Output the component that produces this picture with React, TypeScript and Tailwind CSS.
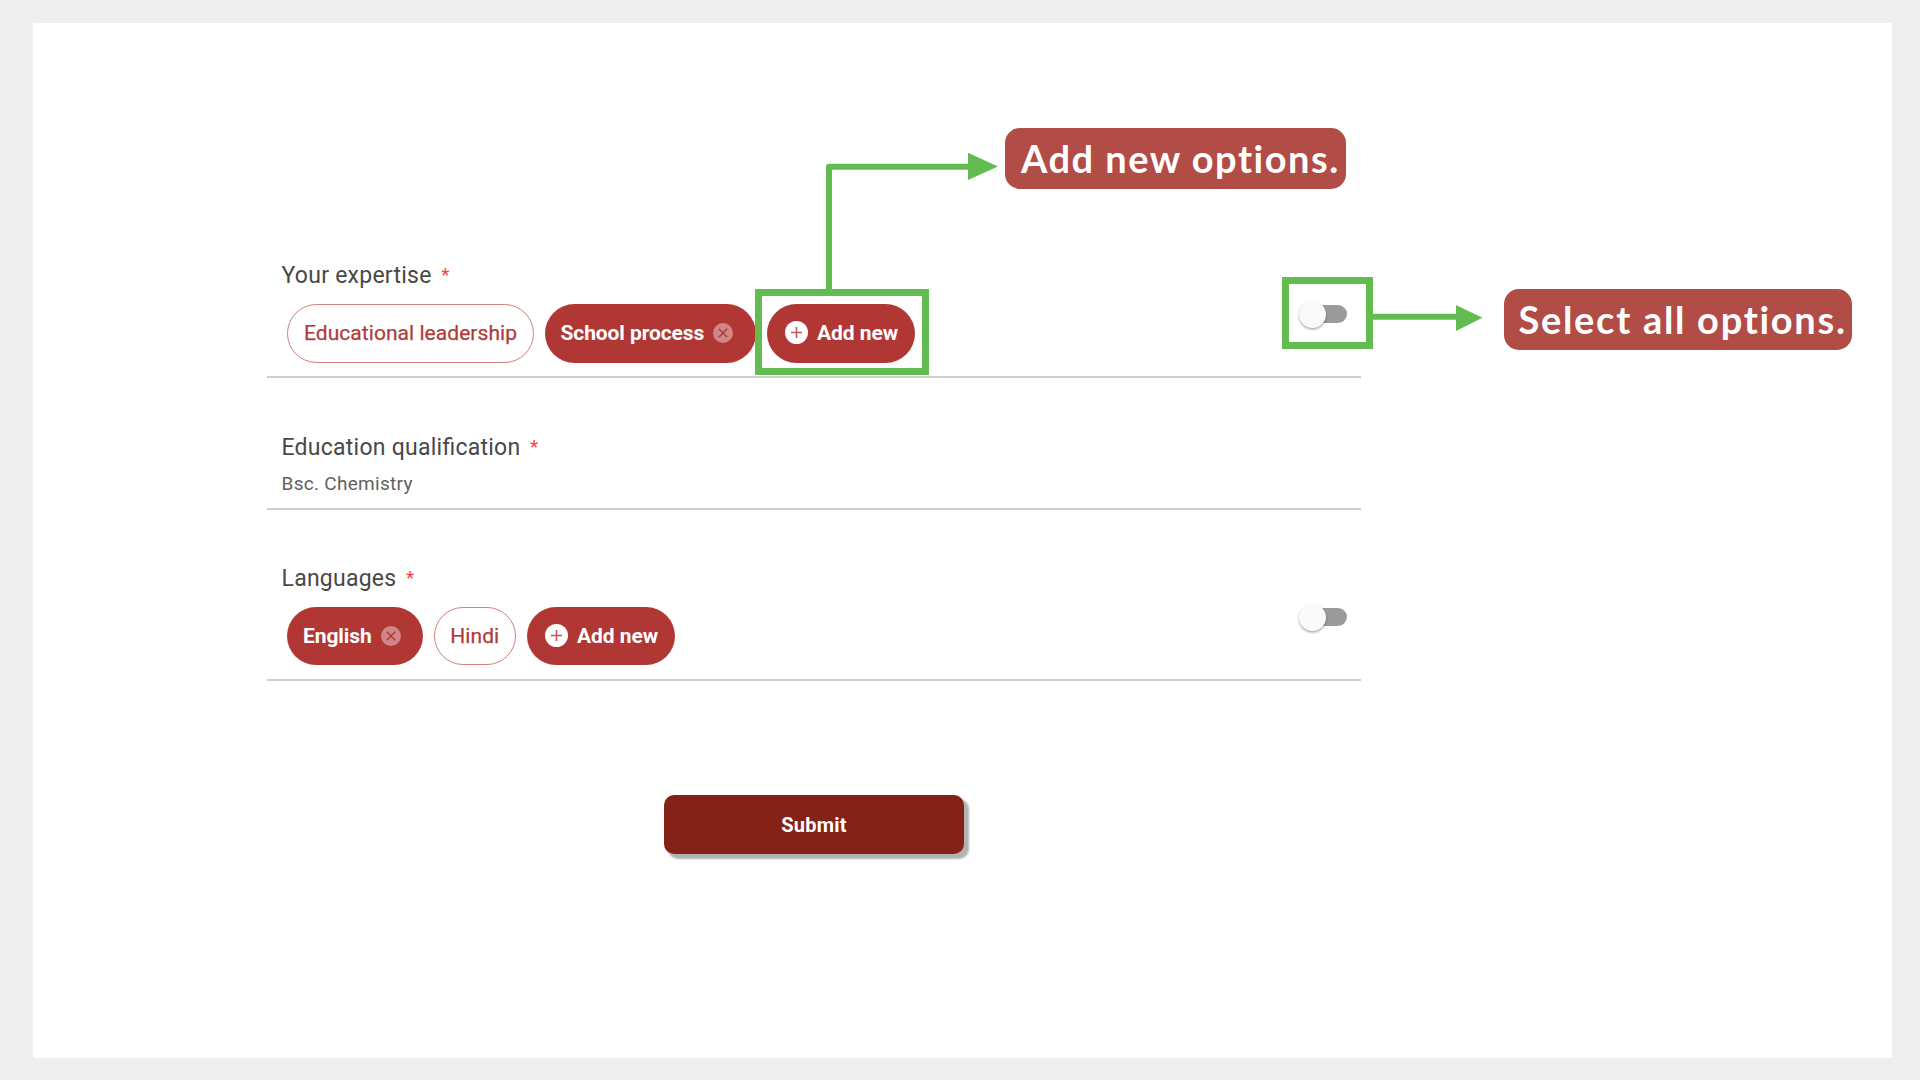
import type { ReactNode } from "react";

function Label({ children }: { children: string }) {
  return (
    <div className="flex h-6 items-center pl-[14.5px] text-[23px] leading-6 tracking-[0.25px] text-[#484848] [font-feature-settings:'liga'_1]">
      <span className="translate-y-px">{children}</span>
      <span className="ml-[9.5px] text-[19px] text-[#ff3d3d]">*</span>
    </div>
  );
}

function RemoveIcon() {
  return (
    <svg className="ml-[9px] size-5 shrink-0" viewBox="0 0 20 20">
      <circle cx="10" cy="10" r="10" fill="#d28586" />
      <path d="M5.8 5.8 14.2 14.2M14.2 5.8 5.8 14.2" stroke="#b13735" strokeWidth="1.4" />
    </svg>
  );
}

function Outlined({ children, className }: { children: string; className: string }) {
  return (
    <span className={`flex items-center justify-center rounded-[30px] border-[1.5px] border-[#cf7f7e] font-normal tracking-[0.05px] text-[#b03c3a] [-webkit-text-stroke:0.25px_#b03c3a] ${className}`}>
      {children}
    </span>
  );
}

function Selected({ children, className }: { children: string; className: string }) {
  return (
    <button className={`flex items-center rounded-[30px] bg-[#b13735] pl-[16px] font-bold tracking-[-0.1px] text-white ${className}`}>
      {children}
      <RemoveIcon />
    </button>
  );
}

function AddNew() {
  return (
    <button className="flex w-[148.5px] items-center rounded-[30px] bg-[#b13735] pl-[18.5px] font-bold tracking-[-0.05px] text-white">
      <svg className="mr-[9px] size-[23px] shrink-0 -translate-y-px" viewBox="0 0 23 23">
        <circle cx="11.5" cy="11.5" r="11.5" fill="#fff" />
        <path d="M11.5 6v11M6 11.5h11" stroke="#bd5654" strokeWidth="1.5" />
      </svg>
      Add new
    </button>
  );
}

function Toggle() {
  return (
    <div className="mr-[14px] mt-[37px] flex h-7 w-12 items-center">
      <span className="z-10 size-[27px] shrink-0 rounded-full bg-[#fafafa] shadow-[0_1.5px_2.5px_rgba(0,0,0,0.35)]" />
      <span className="-ml-[20px] h-[18.5px] w-[41px] rounded-full bg-[#9b9b9b]" />
    </div>
  );
}

function ChipField({ label, className, rowClass, children }: {
  label: string; className: string; rowClass: string; children: ReactNode;
}) {
  return (
    <section className={`flex justify-between border-b-2 border-[#cfcfcf] ${className}`}>
      <div>
        <Label>{label}</Label>
        <div className={`flex pl-[20px] text-[21px] leading-6 ${rowClass}`}>{children}</div>
      </div>
      <Toggle />
    </section>
  );
}

function Callout({ children, className }: { children: string; className: string }) {
  return (
    <div className={`absolute flex items-center whitespace-nowrap rounded-[15px] bg-[#b14c47] font-[Lato,sans-serif] text-[38px] font-bold leading-none text-white ${className}`}>
      {children}
    </div>
  );
}

export default function App() {
  return (
    <div className="relative h-[1080px] w-[1920px] overflow-hidden bg-[#efefef] pl-[33px] pt-[23px] font-[Roboto,sans-serif]">
      <main className="h-[1035px] w-[1859px] bg-white pl-[234px] pt-[240px]">
        <form className="w-[1093.5px]">
          <ChipField label="Your expertise" className="h-[115px]" rowClass="mt-[16.5px] h-[59px]">
            <Outlined className="w-[247px]">Educational leadership</Outlined>
            <Selected className="ml-[10.5px] w-[211px]">School process</Selected>
            <div className="ml-[11px] flex"><AddNew /></div>
          </ChipField>
          <section className="mt-[56.5px] h-[75.5px] border-b-2 border-[#cfcfcf]">
            <Label>Education qualification</Label>
            <p className="mt-[13.5px] pl-[14.5px] text-[19px] leading-6 tracking-[0.3px] text-[#616161]">Bsc. Chemistry</p>
          </section>
          <ChipField label="Languages" className="mt-[56px] h-[115px]" rowClass="mt-[17px] h-[58px]">
            <Selected className="w-[136px]">English</Selected>
            <Outlined className="ml-[10.5px] w-[82.5px]">Hindi</Outlined>
            <div className="ml-[10.5px] flex"><AddNew /></div>
          </ChipField>
          <button className="ml-[397px] mt-[113.5px] flex h-[59px] w-[300px] items-center justify-center rounded-[10px] bg-[#842217] pt-[2px] text-[20px] font-bold tracking-[0.2px] text-white shadow-[4.5px_4.5px_2px_rgba(0,0,0,0.3)]">
            Submit
          </button>
        </form>
      </main>

      <div className="absolute left-[755px] top-[289px] h-[86px] w-[174px] border-7 border-[#63bc50]" />
      <div className="absolute left-[1282px] top-[277px] h-[72px] w-[91px] border-7 border-[#63bc50]" />
      <svg className="absolute left-[826px] top-[152px] h-[138px] w-[173px]" viewBox="0 0 173 138">
        <path d="M3 138V14.8H142" fill="none" stroke="#63bc50" strokeWidth="6" strokeLinejoin="round" />
        <path d="M142 .7 172 14.5 142 28Z" fill="#63bc50" />
      </svg>
      <svg className="absolute left-[1373px] top-[304px] h-[28px] w-[110px]" viewBox="0 0 110 28">
        <path d="M0 12.7H84" stroke="#63bc50" strokeWidth="6" />
        <path d="M83 1 109.5 13.8 83 27Z" fill="#63bc50" />
      </svg>
      <Callout className="left-[1005px] top-[127.5px] h-[61px] w-[341px] pl-[16px] tracking-[1.5px]">Add new options.</Callout>
      <Callout className="left-[1503.5px] top-[288.5px] h-[61px] w-[348px] pl-[15px] tracking-[1.7px]">Select all options.</Callout>
    </div>
  );
}
